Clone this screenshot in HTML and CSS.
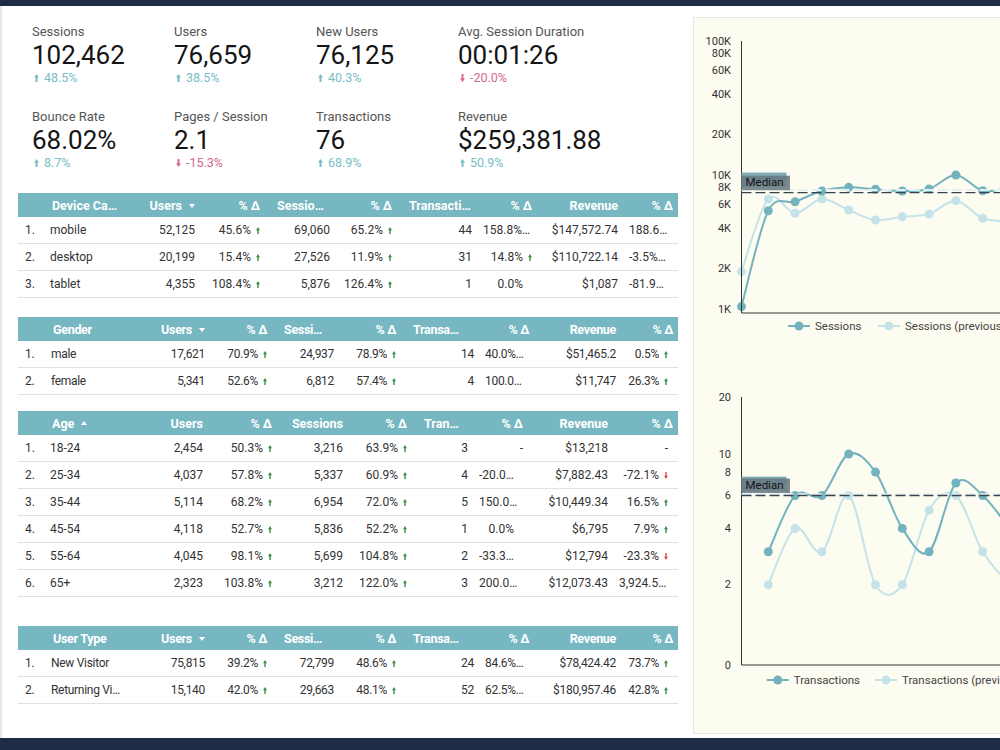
FILE: index.html
```html
<!DOCTYPE html>
<html lang="en">
<head>
    <meta charset="UTF-8">
    <meta name="viewport" content="width=device-width, initial-scale=1.0">
    <title>Ecommerce Overview</title>
    <link rel="stylesheet" href="styles.css">
</head>
<body>
    <div class="topbar"></div>

    <div class="page">
        <div class="report">

            <!-- headline numbers, compared with the previous period -->
            <div class="kpis">
                <div class="kpi">
                    <div class="kpi-label">Sessions</div>
                    <div class="kpi-value">102,462</div>
                    <div class="kpi-delta up">48.5%</div>
                </div>
                <div class="kpi">
                    <div class="kpi-label">Users</div>
                    <div class="kpi-value">76,659</div>
                    <div class="kpi-delta up">38.5%</div>
                </div>
                <div class="kpi">
                    <div class="kpi-label">New Users</div>
                    <div class="kpi-value">76,125</div>
                    <div class="kpi-delta up">40.3%</div>
                </div>
                <div class="kpi">
                    <div class="kpi-label">Avg. Session Duration</div>
                    <div class="kpi-value">00:01:26</div>
                    <div class="kpi-delta down">-20.0%</div>
                </div>
                <div class="kpi">
                    <div class="kpi-label">Bounce Rate</div>
                    <div class="kpi-value">68.02%</div>
                    <div class="kpi-delta up">8.7%</div>
                </div>
                <div class="kpi">
                    <div class="kpi-label">Pages / Session</div>
                    <div class="kpi-value">2.1</div>
                    <div class="kpi-delta down">-15.3%</div>
                </div>
                <div class="kpi">
                    <div class="kpi-label">Transactions</div>
                    <div class="kpi-value">76</div>
                    <div class="kpi-delta up">68.9%</div>
                </div>
                <div class="kpi">
                    <div class="kpi-label">Revenue</div>
                    <div class="kpi-value">$259,381.88</div>
                    <div class="kpi-delta up">50.9%</div>
                </div>
            </div>

            <!-- device category -->
            <div class="tbl t-device">
                <div class="tr hd">
                    <span></span><span class="l">Device Ca…</span><span class="sort-down">Users</span><span>% Δ</span>
                    <span class="cut">Sessio…</span><span>% Δ</span><span class="cut">Transacti…</span><span>% Δ</span>
                    <span>Revenue</span><span>% Δ</span>
                </div>
                <div class="tr">
                    <span class="n">1.</span><span class="l">mobile</span><span>52,125</span><span class="up">45.6%</span>
                    <span>69,060</span><span class="up">65.2%</span><span>44</span><span class="cut">158.8%…</span>
                    <span>$147,572.74</span><span class="cut">188.6…</span>
                </div>
                <div class="tr">
                    <span class="n">2.</span><span class="l">desktop</span><span>20,199</span><span class="up">15.4%</span>
                    <span>27,526</span><span class="up">11.9%</span><span>31</span><span class="up">14.8%</span>
                    <span>$110,722.14</span><span class="cut">-3.5%…</span>
                </div>
                <div class="tr">
                    <span class="n">3.</span><span class="l">tablet</span><span>4,355</span><span class="up">108.4%</span>
                    <span>5,876</span><span class="up">126.4%</span><span>1</span><span class="flat">0.0%</span>
                    <span>$1,087</span><span class="cut">-81.9…</span>
                </div>
            </div>

            <!-- gender -->
            <div class="tbl t-split t-gender">
                <div class="tr hd">
                    <span></span><span class="l">Gender</span><span class="sort-down">Users</span><span>% Δ</span>
                    <span class="cut">Sessi…</span><span>% Δ</span><span class="cut">Transa…</span><span>% Δ</span>
                    <span>Revenue</span><span>% Δ</span>
                </div>
                <div class="tr">
                    <span class="n">1.</span><span class="l">male</span><span>17,621</span><span class="up">70.9%</span>
                    <span>24,937</span><span class="up">78.9%</span><span>14</span><span class="cut">40.0%…</span>
                    <span>$51,465.2</span><span class="up">0.5%</span>
                </div>
                <div class="tr">
                    <span class="n">2.</span><span class="l">female</span><span>5,341</span><span class="up">52.6%</span>
                    <span>6,812</span><span class="up">57.4%</span><span>4</span><span class="cut">100.0…</span>
                    <span>$11,747</span><span class="up">26.3%</span>
                </div>
            </div>

            <!-- age brackets -->
            <div class="tbl t-age">
                <div class="tr hd">
                    <span></span><span class="l sort-up">Age</span><span>Users</span><span>% Δ</span>
                    <span>Sessions</span><span>% Δ</span><span class="cut">Tran…</span><span>% Δ</span>
                    <span>Revenue</span><span>% Δ</span>
                </div>
                <div class="tr">
                    <span class="n">1.</span><span class="l">18-24</span><span>2,454</span><span class="up">50.3%</span>
                    <span>3,216</span><span class="up">63.9%</span><span>3</span><span>-</span>
                    <span>$13,218</span><span>-</span>
                </div>
                <div class="tr">
                    <span class="n">2.</span><span class="l">25-34</span><span>4,037</span><span class="up">57.8%</span>
                    <span>5,337</span><span class="up">60.9%</span><span>4</span><span class="cut">-20.0…</span>
                    <span>$7,882.43</span><span class="down">-72.1%</span>
                </div>
                <div class="tr">
                    <span class="n">3.</span><span class="l">35-44</span><span>5,114</span><span class="up">68.2%</span>
                    <span>6,954</span><span class="up">72.0%</span><span>5</span><span class="cut">150.0…</span>
                    <span>$10,449.34</span><span class="up">16.5%</span>
                </div>
                <div class="tr">
                    <span class="n">4.</span><span class="l">45-54</span><span>4,118</span><span class="up">52.7%</span>
                    <span>5,836</span><span class="up">52.2%</span><span>1</span><span class="flat">0.0%</span>
                    <span>$6,795</span><span class="up">7.9%</span>
                </div>
                <div class="tr">
                    <span class="n">5.</span><span class="l">55-64</span><span>4,045</span><span class="up">98.1%</span>
                    <span>5,699</span><span class="up">104.8%</span><span>2</span><span class="cut">-33.3…</span>
                    <span>$12,794</span><span class="down">-23.3%</span>
                </div>
                <div class="tr">
                    <span class="n">6.</span><span class="l">65+</span><span>2,323</span><span class="up">103.8%</span>
                    <span>3,212</span><span class="up">122.0%</span><span>3</span><span class="cut">200.0…</span>
                    <span>$12,073.43</span><span class="cut">3,924.5…</span>
                </div>
            </div>

            <!-- new vs returning -->
            <div class="tbl t-split">
                <div class="tr hd">
                    <span></span><span class="l">User Type</span><span class="sort-down">Users</span><span>% Δ</span>
                    <span class="cut">Sessi…</span><span>% Δ</span><span class="cut">Transa…</span><span>% Δ</span>
                    <span>Revenue</span><span>% Δ</span>
                </div>
                <div class="tr">
                    <span class="n">1.</span><span class="l">New Visitor</span><span>75,815</span><span class="up">39.2%</span>
                    <span>72,799</span><span class="up">48.6%</span><span>24</span><span class="cut">84.6%…</span>
                    <span>$78,424.42</span><span class="up">73.7%</span>
                </div>
                <div class="tr">
                    <span class="n">2.</span><span class="l">Returning Vi…</span><span>15,140</span><span class="up">42.0%</span>
                    <span>29,663</span><span class="up">48.1%</span><span>52</span><span class="cut">62.5%…</span>
                    <span>$180,957.46</span><span class="up">42.8%</span>
                </div>
            </div>
        </div>

        <div class="charts">
            <div class="chart-panel">
                <svg id="sessionsChart" class="chart" width="306" height="348"></svg>
                <svg id="transactionsChart" class="chart" width="306" height="367"></svg>
            </div>
        </div>
    </div>

    <div class="bottombar"></div>

    <script src="charts.js"></script>
</body>
</html>
```

FILE: styles.css
```css
* {
    box-sizing: border-box;
}
html, body {
    margin: 0;
}
body {
    width: 1000px;
    height: 750px;
    overflow: hidden;
    display: flex;
    flex-direction: column;
    font-family: Roboto, "Liberation Sans", sans-serif;
    color: #222;
    background: #fff;
}
.topbar {
    flex: none;
    height: 6px;
    background: #1f2a45;
}
.bottombar {
    flex: none;
    height: 12px;
    background: #1f2a45;
}
.page {
    flex: 1;
    display: flex;
    min-height: 0;
}

/* left column: scorecards + tables */
.report {
    flex: none;
    width: 693px;
    padding: 18px 0 0 16px;
    border-left: 2px solid #e7e7e7;
}
.kpis {
    display: grid;
    grid-template-columns: repeat(4, 142px);
    row-gap: 23px;
    padding-left: 14px;
    margin-bottom: 22px;
}
.kpi-label {
    font-size: 13px;
    line-height: 16px;
    color: #555;
}
.kpi-value {
    font-size: 26px;
    line-height: 30px;
    color: #151515;
}
.kpi-delta {
    font-size: 12.5px;
    line-height: 16px;
    color: #79bdc7;
}
.kpi-delta.down {
    color: #d5688d;
}
.kpi-delta::before {
    content: "";
    display: inline-block;
    width: 5px;
    height: 8px;
    margin: 0 5px 0 2px;
    background: currentColor;
    clip-path: polygon(50% 0, 100% 45%, 70% 45%, 70% 100%, 30% 100%, 30% 45%, 0 45%);
}
.kpi-delta.down::before {
    transform: rotate(180deg);
}

/* tables */
.tbl {
    width: 660px;
    font-size: 12px;
    color: #333;
}
.t-device { margin-bottom: 19px; }
.t-gender { margin-bottom: 16px; }
.t-age { margin-bottom: 29px; }

.tr {
    display: grid;
    align-items: center;
    height: 27px;
    border-bottom: 1px solid #e2e2e2;
}
.t-device .tr {
    grid-template-columns: 27px 95px 60px 65px 70px 62px 80px 60px 86px 55px;
}
.t-split .tr {
    grid-template-columns: 28px 99px 65px 62px 67px 62px 78px 55px 87px 57px;
    letter-spacing: -0.3px;
}
.t-age .tr {
    grid-template-columns: 27px 115px 48px 69px 71px 64px 61px 55px 85px 65px;
}
.tr > span {
    padding: 0 5px;
    text-align: right;
    white-space: nowrap;
    overflow: hidden;
}
.tr > span:last-child {
    padding-right: 10px;
}
.tr .n {
    text-align: left;
    padding-left: 7px;
}
.tr .l {
    text-align: left;
}
.tr .cut {
    text-align: left;
    padding-left: 6px;
}
.hd {
    height: 24px;
    border-bottom: none;
    background: #77b7c2;
    color: #fff;
    font-size: 12.5px;
    font-weight: 700;
}
.hd > span:last-child {
    padding-right: 5px;
}
.hd .l {
    padding-left: 7px;
}
.hd .cut {
    padding: 0 0 0 12px;
}
.sort-down::after,
.sort-up::after {
    content: "";
    display: inline-block;
    margin-left: 7px;
    vertical-align: middle;
    border-left: 3.5px solid transparent;
    border-right: 3.5px solid transparent;
}
.sort-down::after {
    border-top: 4px solid #fff;
}
.sort-up::after {
    border-bottom: 4px solid #fff;
    margin-top: -3px;
}

/* little change arrows after a % value in the tables */
.tr .up::after,
.tr .down::after,
.tr .flat::after {
    content: "";
    display: inline-block;
    width: 4px;
    height: 7px;
    margin-left: 5px;
    background: #3d8f46;
    clip-path: polygon(50% 0, 100% 45%, 68% 45%, 68% 100%, 32% 100%, 32% 45%, 0 45%);
}
.tr .down::after {
    background: #e2463f;
    transform: rotate(180deg);
}
.tr .flat::after {
    visibility: hidden;
}

/* right column: trend charts */
.charts {
    flex: 1;
    padding: 11px 0 4px;
}
.chart-panel {
    height: 100%;
    display: flex;
    flex-direction: column;
    background: #fdfcf0;
    border: 1px solid #e6e6e1;
    border-right: none;
}
.chart {
    display: block;
    flex: none;
    font-family: Roboto, "Liberation Sans", sans-serif;
}
.chart .axis {
    stroke: #333;
    stroke-width: 1;
}
.chart .tick {
    font-size: 11px;
    fill: #333;
    text-anchor: end;
    dominant-baseline: central;
}
.chart .line {
    fill: none;
    stroke-width: 2;
}
.chart .ref-avg {
    stroke: #e4f0f1;
    stroke-width: 2;
    stroke-dasharray: 10 4;
}
.chart .ref-med {
    stroke: #37444d;
    stroke-width: 1.3;
    stroke-dasharray: 10 4;
}
.chart .ref-label {
    font-size: 11.5px;
}
.chart .legend {
    font-size: 11.5px;
    fill: #444;
    dominant-baseline: central;
}
```

FILE: charts.js
```js
// Trend charts in the right panel: log y axis, smoothed series,
// average / median reference lines and a legend under each plot.

const SVG_NS = 'http://www.w3.org/2000/svg';
const DARK = '#72b3be';
const LIGHT = '#c4e3e8';
const AXIS_X = 47.5;
const STEP = 26.8;

function add(parent, tag, attrs, text) {
    const node = document.createElementNS(SVG_NS, tag);
    for (const key in attrs) node.setAttribute(key, attrs[key]);
    if (text !== undefined) node.textContent = text;
    parent.appendChild(node);
    return node;
}

// catmull-rom through every point, written out as cubic beziers
function smooth(pts) {
    const r = n => n.toFixed(1);
    let d = 'M' + r(pts[0][0]) + ',' + r(pts[0][1]);
    for (let i = 0; i < pts.length - 1; i++) {
        const p0 = pts[i - 1] || pts[i];
        const p1 = pts[i];
        const p2 = pts[i + 1];
        const p3 = pts[i + 2] || p2;
        const c1x = p1[0] + (p2[0] - p0[0]) / 6;
        const c1y = p1[1] + (p2[1] - p0[1]) / 6;
        const c2x = p2[0] - (p3[0] - p1[0]) / 6;
        const c2y = p2[1] - (p3[1] - p1[1]) / 6;
        d += ` C${r(c1x)},${r(c1y)} ${r(c2x)},${r(c2y)} ${r(p2[0])},${r(p2[1])}`;
    }
    return d;
}

function drawChart(cfg) {
    const svg = document.getElementById(cfg.id);
    const right = 330;

    cfg.ticks.forEach(([value, label]) => {
        const y = value === 0 ? cfg.bottom : cfg.y(value);
        add(svg, 'text', { x: 37, y: y, class: 'tick' }, label);
    });

    // previous period first so the current one sits on top
    cfg.series.forEach(s => {
        const pts = [];
        s.values.forEach((v, i) => {
            if (v) pts.push([AXIS_X + STEP * i, cfg.y(v)]);
        });
        add(svg, 'path', { d: smooth(pts), stroke: s.color, class: 'line' });
        pts.forEach(p => add(svg, 'circle', { cx: p[0], cy: p[1], r: 4.5, fill: s.color }));
    });

    add(svg, 'line', { x1: AXIS_X, y1: cfg.top, x2: AXIS_X, y2: cfg.bottom, class: 'axis' });
    add(svg, 'line', { x1: AXIS_X, y1: cfg.bottom, x2: right, y2: cfg.bottom, class: 'axis' });

    const avgY = cfg.y(cfg.average);
    const medY = cfg.y(cfg.median);
    add(svg, 'line', { x1: AXIS_X, y1: avgY, x2: right, y2: avgY, class: 'ref-avg' });
    add(svg, 'line', { x1: AXIS_X, y1: medY, x2: right, y2: medY, class: 'ref-med' });

    // reference labels, median drawn over average
    const avgBottom = avgY - 3;
    add(svg, 'rect', { x: AXIS_X, y: avgBottom - 14.5, width: 45, height: 14.5, fill: '#80abb4' });
    add(svg, 'text', { x: AXIS_X + 4, y: avgBottom - 0.5, fill: '#eef5f6', class: 'ref-label' }, 'Average');
    const medBottom = medY - 2.5;
    add(svg, 'rect', { x: AXIS_X, y: medBottom - 14.5, width: 48.5, height: 14.5, fill: '#66777f', opacity: 0.85 });
    add(svg, 'text', { x: AXIS_X + 4, y: medBottom - 4, fill: '#141414', class: 'ref-label' }, 'Median');

    cfg.legend.forEach(([x, label, color]) => {
        add(svg, 'line', { x1: x, y1: cfg.legendY, x2: x + 22, y2: cfg.legendY, stroke: color, 'stroke-width': 2 });
        add(svg, 'circle', { cx: x + 11, cy: cfg.legendY, r: 4.5, fill: color });
        add(svg, 'text', { x: x + 27, y: cfg.legendY, class: 'legend' }, label);
    });
}

drawChart({
    id: 'sessionsChart',
    top: 23,
    bottom: 295,
    y: v => 291 - 134 * Math.log10(v / 1000),
    ticks: [
        [100000, '100K'], [80000, '80K'], [60000, '60K'], [40000, '40K'], [20000, '20K'],
        [10000, '10K'], [8000, '8K'], [6000, '6K'], [4000, '4K'], [2000, '2K'], [1000, '1K']
    ],
    series: [
        { color: LIGHT, values: [1902, 6618, 5184, 6620, 5478, 4617, 4880, 5121, 6432, 4749, 4540, 4700] },
        { color: DARK, values: [1042, 5406, 6318, 7601, 8093, 7822, 7598, 7861, 10004, 7633, 7980, 7800] }
    ],
    average: 7720,
    median: 7380,
    legendY: 308,
    legend: [[94, 'Sessions', DARK], [184, 'Sessions (previous period)', LIGHT]]
});

drawChart({
    id: 'transactionsChart',
    top: 31,
    bottom: 299,
    y: v => 275 - 187 * Math.log10(v),
    ticks: [[20, '20'], [10, '10'], [8, '8'], [6, '6'], [4, '4'], [2, '2'], [0, '0']],
    series: [
        { color: LIGHT, values: [0, 2, 4, 3, 6, 2, 2, 5, 6, 3, 2] },
        { color: DARK, values: [0, 3, 6, 6, 10, 8, 4, 3, 7, 6, 4] }
    ],
    average: 6.1,
    median: 6,
    legendY: 314,
    legend: [[72.7, 'Transactions', DARK], [181, 'Transactions (previous period)', LIGHT]]
});
```
